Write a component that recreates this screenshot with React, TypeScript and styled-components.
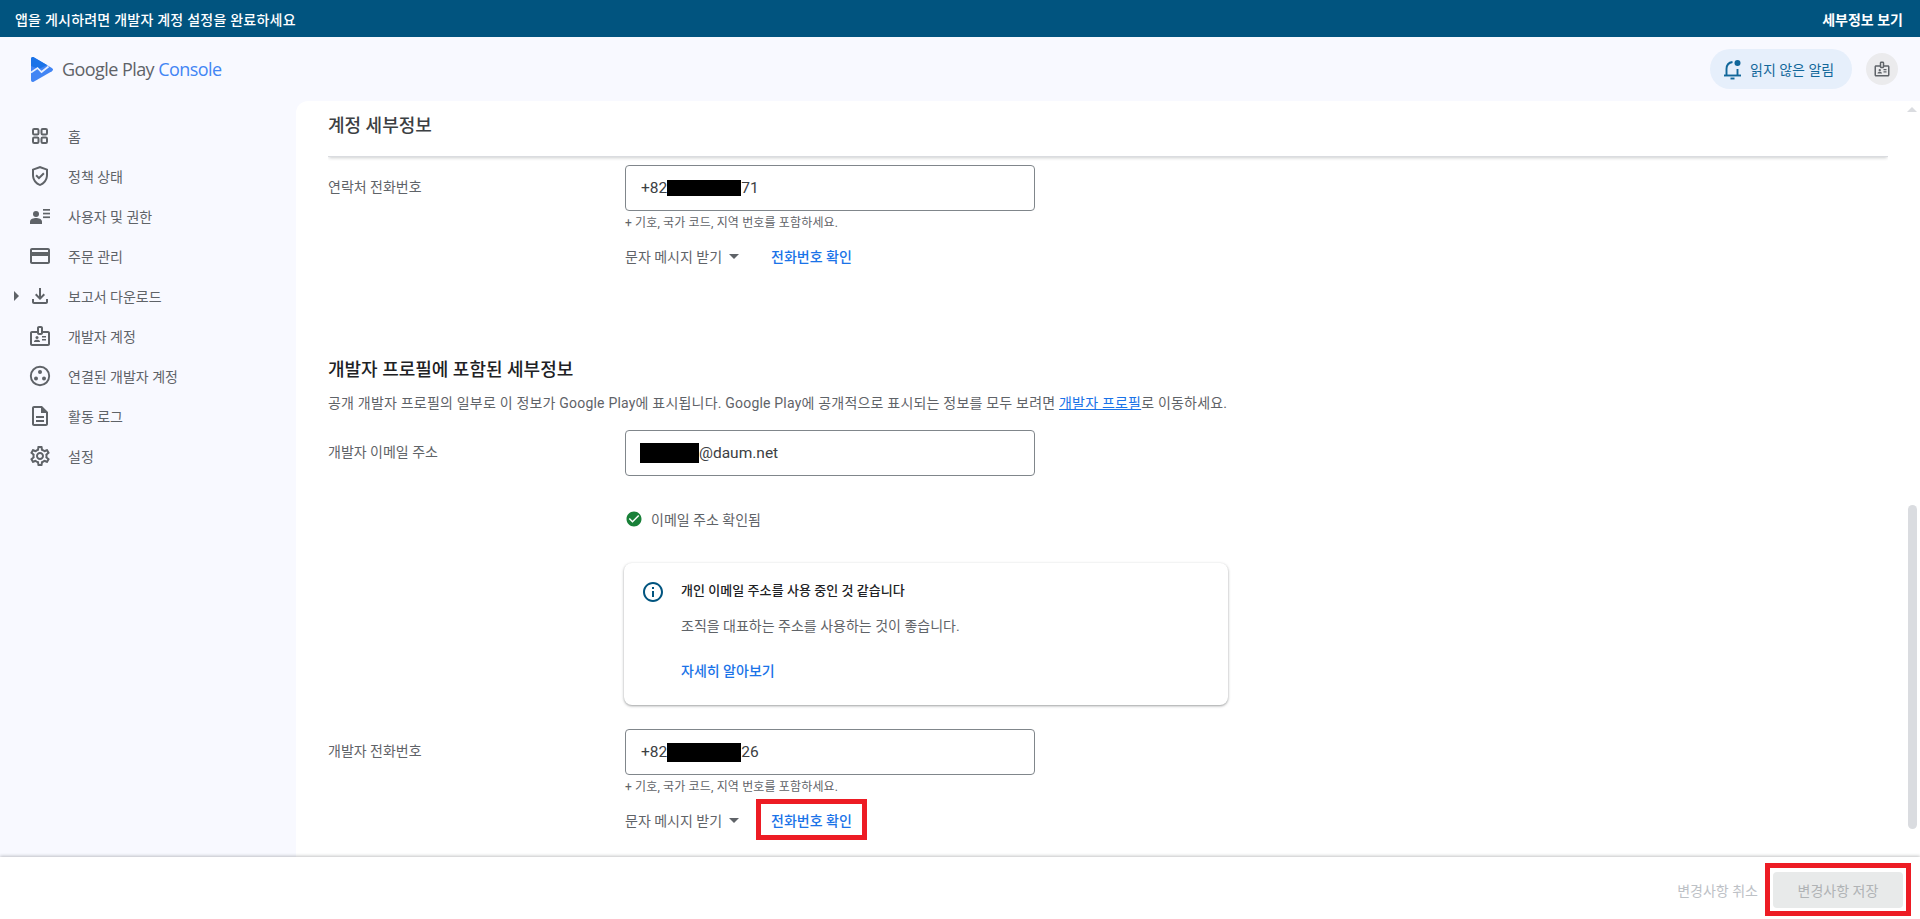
import React from "react";
import styled, { createGlobalStyle } from "styled-components";
import {
  MdOutlineGppGood,
  MdOutlineCreditCard,
  MdOutlineFileDownload,
  MdOutlineBadge,
  MdOutlineDescription,
  MdOutlineSettings,
  MdOutlineInfo,
  MdCheckCircle,
  MdArrowDropDown,
  MdArrowRight,
} from "react-icons/md";

const FONT = `Roboto, "Noto Sans CJK KR", sans-serif`;

const Global = createGlobalStyle`
  html, body { margin: 0; padding: 0; height: 100%; background: #f8f9ff; overflow: hidden; }
  * { box-sizing: border-box; }
  body { font-family: ${FONT}; }
`;

const Page = styled.div`
  height: 919px;
  display: flex;
  flex-direction: column;
  overflow: hidden;
`;

const Banner = styled.div`
  height: 37px;
  flex: none;
  background: #01547f;
  color: #fff;
  display: flex;
  align-items: center;
  justify-content: space-between;
  padding: 0 17px 0 15px;
  font-size: 14px;
  font-weight: 500;
`;

const BannerMessage = styled.span`
  letter-spacing: 0.23px;
`;

const BannerAction = styled.span`
  font-weight: 700;
`;

const Header = styled.header`
  height: 64px;
  flex: none;
  display: flex;
  align-items: center;
  justify-content: space-between;
  padding: 0 22px 0 31px;
`;

const Logo = styled.div`
  display: flex;
  align-items: center;
  gap: 9px;
`;

const LogoText = styled.span`
  font-family: "Open Sans", sans-serif;
  font-size: 18px;
  letter-spacing: -0.56px;
  color: #5f6368;
`;

const LogoAccent = styled.span`
  color: #4285f4;
`;

const HeaderRight = styled.div`
  display: flex;
  align-items: center;
  gap: 14px;
`;

const AlertPill = styled.div`
  width: 142px;
  height: 40px;
  border-radius: 20px;
  background: #e6effb;
  color: #11679a;
  display: flex;
  align-items: center;
  gap: 7px;
  padding-left: 13px;
  font-size: 14px;
`;

const AccountButton = styled.div`
  width: 32px;
  height: 32px;
  border-radius: 50%;
  background: #ebebed;
  color: #5f6368;
  display: flex;
  align-items: center;
  justify-content: center;
`;

const Body = styled.div`
  flex: 1;
  min-height: 0;
  display: flex;
`;

const Sidebar = styled.nav`
  width: 296px;
  flex: none;
  padding-top: 15px;
`;

const NavRow = styled.div`
  height: 40px;
  display: flex;
  align-items: center;
  color: #5f6368;
  font-size: 14px;
`;

const CaretSlot = styled.span`
  width: 28px;
  flex: none;
  display: flex;
  justify-content: center;
  padding-left: 4px;
  color: #5f6368;
`;

const NavIcon = styled.span`
  width: 24px;
  height: 24px;
  flex: none;
  margin-right: 16px;
  display: flex;
  align-items: center;
  justify-content: center;
`;

const Main = styled.main`
  flex: 1;
  min-width: 0;
  position: relative;
  background: #fff;
  border-top-left-radius: 12px;
  overflow: hidden;
`;

const TitleBar = styled.div`
  height: 56px;
  margin: 0 32px;
  display: flex;
  align-items: flex-start;
  padding-top: 10px;
  font-size: 18px;
  font-weight: 500;
  color: #3c4043;
  border-bottom: 1px solid #dadce0;
  box-shadow: 0 2px 3px -1px rgba(60, 64, 67, 0.25);
  clip-path: inset(0 0 -6px 0);
`;

const Content = styled.div`
  padding: 0 32px;
`;

const FieldRow = styled.div<{ $top: number }>`
  display: flex;
  align-items: center;
  margin-top: ${(p) => p.$top}px;
`;

const FieldLabel = styled.label`
  width: 297px;
  flex: none;
  padding-bottom: 5px;
  font-size: 14px;
  color: #5f6368;
`;

const InputBox = styled.div`
  width: 410px;
  height: 46px;
  border: 1px solid #80868b;
  border-radius: 4px;
  display: flex;
  align-items: center;
  padding-left: 15px;
  font-size: 15.5px;
  color: #3c4043;
`;

const Redacted = styled.span<{ $w: number; $h: number }>`
  display: inline-block;
  flex: none;
  background: #000;
  width: ${(p) => p.$w}px;
  height: ${(p) => p.$h}px;
`;

const RedactedLead = styled(Redacted)`
  margin-left: -1px;
`;

const Hint = styled.div`
  margin: 4px 0 0 297px;
  height: 16px;
  line-height: 16px;
  font-size: 12px;
  letter-spacing: 0.15px;
  color: #5f6368;
`;

const SmsRow = styled.div<{ $top: number }>`
  margin: ${(p) => p.$top}px 0 0 297px;
  display: flex;
  align-items: center;
  font-size: 14px;
  color: #5f6368;
`;

const SmsSelect = styled.span`
  width: 131px;
  flex: none;
  display: flex;
  align-items: center;
`;

const LinkBox = styled.a<{ $marked?: boolean }>`
  width: 111px;
  height: 41px;
  flex: none;
  border: 5px solid ${(p) => (p.$marked ? "#ed1c24" : "transparent")};
  display: flex;
  align-items: center;
  justify-content: center;
  color: #1a73e8;
  font-size: 14px;
  font-weight: 500;
`;

const SectionTitle = styled.h2`
  margin: 82px 0 0;
  height: 24px;
  line-height: 24px;
  font-size: 18px;
  font-weight: 500;
  color: #202124;
`;

const SectionText = styled.p`
  margin: 11px 0 0;
  height: 20px;
  line-height: 20px;
  font-size: 14px;
  letter-spacing: 0.2px;
  color: #5f6368;
`;

const InlineLink = styled.a`
  color: #1a73e8;
  text-decoration: underline;
`;

const Verified = styled.div`
  margin: 33px 0 0 297px;
  height: 20px;
  display: flex;
  align-items: center;
  gap: 8px;
  font-size: 14px;
  color: #5f6368;
`;

const NoticeCard = styled.div`
  margin: 34px 0 0 296px;
  width: 604px;
  height: 142px;
  border-radius: 8px;
  background: #fff;
  box-shadow: 0 1px 3px rgba(60, 64, 67, 0.35), 0 1px 2px rgba(60, 64, 67, 0.2);
  display: flex;
  padding: 17px 0 0 17px;
  gap: 16px;
`;

const NoticeBody = styled.div`
  display: flex;
  flex-direction: column;
`;

const NoticeTitle = styled.div`
  height: 22px;
  line-height: 22px;
  font-size: 13px;
  letter-spacing: 0.05px;
  font-weight: 500;
  color: #202124;
`;

const NoticeText = styled.div`
  margin-top: 13px;
  height: 22px;
  line-height: 22px;
  font-size: 14px;
  color: #5f6368;
`;

const NoticeLink = styled.a`
  margin-top: 23px;
  height: 22px;
  line-height: 22px;
  font-size: 14px;
  font-weight: 500;
  color: #1a73e8;
`;

const ScrollThumb = styled.div`
  position: absolute;
  right: 3px;
  top: 404px;
  width: 9px;
  height: 324px;
  border-radius: 5px;
  background: #dadce0;
`;

const ScrollArrow = styled.div`
  position: absolute;
  right: 3px;
  top: 6px;
  width: 0;
  height: 0;
  border-left: 5px solid transparent;
  border-right: 5px solid transparent;
  border-bottom: 5px solid #dadce0;
`;

const Footer = styled.footer`
  height: 62px;
  flex: none;
  position: relative;
  background: #fff;
  box-shadow: 0 -1px 3px rgba(60, 64, 67, 0.3);
  display: flex;
  align-items: center;
  justify-content: flex-end;
  padding: 3px 9px 0 0;
`;

const CancelText = styled.span`
  font-size: 14px;
  color: #bdc1c6;
  margin-right: 7px;
`;

const SaveFrame = styled.div`
  width: 146px;
  height: 53px;
  border: 5px solid #ed1c24;
  display: flex;
  align-items: center;
  justify-content: center;
`;

const SaveButton = styled.button`
  width: 130px;
  height: 36px;
  border: 0;
  border-radius: 4px;
  background: #e8eaea;
  color: #b0b3b5;
  font-family: ${FONT};
  font-size: 14px;
`;

const GridIcon = () => (
  <svg width="20" height="20" viewBox="0 0 20 20" fill="none" stroke="#5f6368" strokeWidth="2">
    <rect x="3" y="3" width="5.5" height="5.5" rx="1.2" />
    <rect x="11.5" y="3" width="5.5" height="5.5" rx="1.2" />
    <rect x="3" y="11.5" width="5.5" height="5.5" rx="1.2" />
    <rect x="11.5" y="11.5" width="5.5" height="5.5" rx="1.2" />
  </svg>
);

const UsersIcon = () => (
  <svg width="24" height="24" viewBox="0 0 24 24" fill="#5f6368">
    <circle cx="8" cy="10" r="3" />
    <path d="M2 20v-2.2C2 15 5.6 14 8 14s6 1 6 3.8V20z" />
    <rect x="15" y="5" width="7" height="1.7" />
    <rect x="15" y="8.7" width="7" height="1.7" />
    <rect x="15" y="12.4" width="7" height="1.7" />
  </svg>
);

const ConnectedIcon = () => (
  <svg width="24" height="24" viewBox="0 0 24 24" fill="#5f6368">
    <circle cx="12" cy="12" r="9.2" fill="none" stroke="#5f6368" strokeWidth="1.9" />
    <circle cx="12" cy="8" r="2" />
    <circle cx="8" cy="14.5" r="2" />
    <circle cx="16" cy="14.5" r="2" />
  </svg>
);

const BellIcon = () => (
  <svg width="20" height="22" viewBox="0 0 20 22" fill="none" stroke="#11679a" strokeWidth="1.9">
    <path d="M1 17.5h17" />
    <path d="M3.5 17.5V11C3.5 7 6 4.5 9.5 4" />
    <path d="M14.5 11v6.5" />
    <circle cx="14.5" cy="5" r="3" fill="#11679a" stroke="none" />
    <path d="M7.5 20.5h4" />
  </svg>
);

const LogoMark = () => (
  <svg width="22" height="25" viewBox="0 0 22 25">
    <path d="M0 2C0 .4 1.3-.4 2.7.3L20.9 10.9c1.5.9 1.5 2.4 0 3.3L2.7 24.7C1.3 25.4 0 24.6 0 23z" fill="#4285f4" />
    <path d="M0 2C0 .4 1.3-.4 2.7.3L16 8 8 12 0 9z" fill="#1a73e8" />
    <path d="M0 15.5l6.5-4.5 4 4 7-5.5" fill="none" stroke="#e8f0fe" strokeWidth="1.7" />
  </svg>
);

const navItems: { label: string; icon: React.ReactNode; caret?: boolean }[] = [
  { label: "홈", icon: <GridIcon /> },
  { label: "정책 상태", icon: <MdOutlineGppGood size={24} /> },
  { label: "사용자 및 권한", icon: <UsersIcon /> },
  { label: "주문 관리", icon: <MdOutlineCreditCard size={24} /> },
  { label: "보고서 다운로드", icon: <MdOutlineFileDownload size={24} />, caret: true },
  { label: "개발자 계정", icon: <MdOutlineBadge size={24} /> },
  { label: "연결된 개발자 계정", icon: <ConnectedIcon /> },
  { label: "활동 로그", icon: <MdOutlineDescription size={24} /> },
  { label: "설정", icon: <MdOutlineSettings size={24} /> },
];

const SmsActions = ({ top, marked }: { top: number; marked?: boolean }) => (
  <SmsRow $top={top}>
    <SmsSelect>
      문자 메시지 받기
      <MdArrowDropDown size={24} color="#5f6368" />
    </SmsSelect>
    <LinkBox $marked={marked}>전화번호 확인</LinkBox>
  </SmsRow>
);

export default function App() {
  return (
    <Page>
      <Global />
      <Banner>
        <BannerMessage>앱을 게시하려면 개발자 계정 설정을 완료하세요</BannerMessage>
        <BannerAction>세부정보 보기</BannerAction>
      </Banner>
      <Header>
        <Logo>
          <LogoMark />
          <LogoText>
            Google Play <LogoAccent>Console</LogoAccent>
          </LogoText>
        </Logo>
        <HeaderRight>
          <AlertPill>
            <BellIcon />
            읽지 않은 알림
          </AlertPill>
          <AccountButton>
            <MdOutlineBadge size={18} />
          </AccountButton>
        </HeaderRight>
      </Header>
      <Body>
        <Sidebar>
          {navItems.map((item) => (
            <NavRow key={item.label}>
              <CaretSlot>{item.caret && <MdArrowRight size={24} />}</CaretSlot>
              <NavIcon>{item.icon}</NavIcon>
              {item.label}
            </NavRow>
          ))}
        </Sidebar>
        <Main>
          <TitleBar>계정 세부정보</TitleBar>
          <Content>
            <FieldRow $top={8}>
              <FieldLabel>연락처 전화번호</FieldLabel>
              <InputBox>
                +82
                <Redacted $w={74} $h={16} />
                71
              </InputBox>
            </FieldRow>
            <Hint>+ 기호, 국가 코드, 지역 번호를 포함하세요.</Hint>
            <SmsActions top={4} />
            <SectionTitle>개발자 프로필에 포함된 세부정보</SectionTitle>
            <SectionText>
              공개 개발자 프로필의 일부로 이 정보가 Google Play에 표시됩니다. Google Play에 공개적으로 표시되는 정보를 모두 보려면{" "}
              <InlineLink>개발자 프로필</InlineLink>로 이동하세요.
            </SectionText>
            <FieldRow $top={17}>
              <FieldLabel>개발자 이메일 주소</FieldLabel>
              <InputBox>
                <RedactedLead $w={59} $h={20} />
                @daum.net
              </InputBox>
            </FieldRow>
            <Verified>
              <MdCheckCircle size={18} color="#188038" />
              이메일 주소 확인됨
            </Verified>
            <NoticeCard>
              <MdOutlineInfo size={24} color="#01547f" />
              <NoticeBody>
                <NoticeTitle>개인 이메일 주소를 사용 중인 것 같습니다</NoticeTitle>
                <NoticeText>조직을 대표하는 주소를 사용하는 것이 좋습니다.</NoticeText>
                <NoticeLink>자세히 알아보기</NoticeLink>
              </NoticeBody>
            </NoticeCard>
            <FieldRow $top={24}>
              <FieldLabel>개발자 전화번호</FieldLabel>
              <InputBox>
                +82
                <Redacted $w={74} $h={19} />
                26
              </InputBox>
            </FieldRow>
            <Hint>+ 기호, 국가 코드, 지역 번호를 포함하세요.</Hint>
            <SmsActions top={4} marked />
          </Content>
          <ScrollArrow />
          <ScrollThumb />
        </Main>
      </Body>
      <Footer>
        <CancelText>변경사항 취소</CancelText>
        <SaveFrame>
          <SaveButton>변경사항 저장</SaveButton>
        </SaveFrame>
      </Footer>
    </Page>
  );
}
